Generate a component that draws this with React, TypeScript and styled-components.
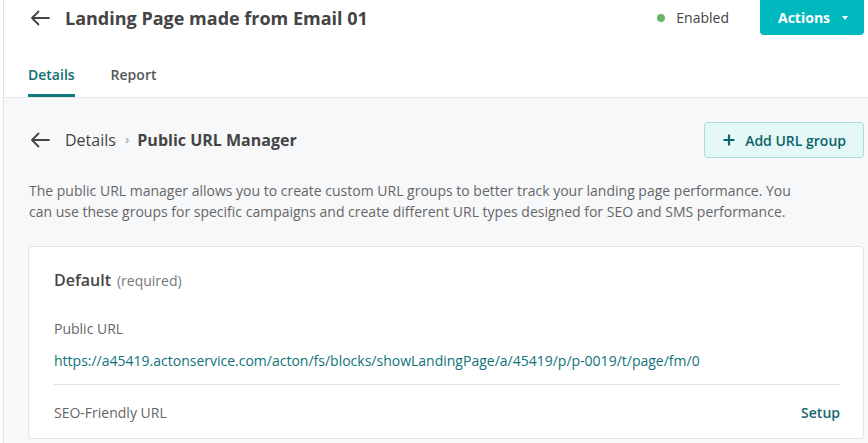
import React from "react";
import styled, { createGlobalStyle } from "styled-components";

const GlobalStyle = createGlobalStyle`
  html, body {
    margin: 0;
    padding: 0;
    background: #ffffff;
    font-family: "Open Sans", "Noto Sans", Arial, sans-serif;
    color: #444444;
  }
  * { box-sizing: border-box; }
`;

const Shell = styled.div`
  padding-left: 3px;
  background: #ffffff;
  height: 443px;
  overflow: hidden;
`;

const Frame = styled.div`
  border-left: 1px solid #e4e4e4;
  height: 100%;
  background: #f7f8fa;
`;

const Header = styled.header`
  background: #ffffff;
  border-bottom: 1px solid #e6e6e6;
  padding: 0 4px 0 24px;
`;

const TopRow = styled.div`
  display: flex;
  align-items: center;
  height: 35px;
`;

const BackButton = styled.button`
  display: flex;
  align-items: center;
  justify-content: center;
  width: 24px;
  height: 24px;
  padding: 0;
  margin-right: 13px;
  border: none;
  background: none;
  color: #444444;
  cursor: pointer;
`;

const Title = styled.h1`
  margin: 0;
  font-size: 18px;
  font-weight: 700;
  line-height: 24px;
  color: #444444;
`;

const Spacer = styled.div`
  flex: 1;
`;

const Status = styled.div`
  display: flex;
  align-items: center;
  gap: 11px;
  font-size: 14px;
  color: #444444;
  margin-right: 31px;
`;

const Dot = styled.span`
  width: 8px;
  height: 8px;
  border-radius: 50%;
  background: #6ab56a;
`;

const ActionsButton = styled.button`
  display: flex;
  align-items: center;
  gap: 12px;
  height: 35px;
  width: 104px;
  padding: 0 0 0 18px;
  border: none;
  border-radius: 0 0 4px 4px;
  background: #00b9be;
  color: #ffffff;
  font-family: inherit;
  font-size: 14px;
  font-weight: 700;
  cursor: pointer;
`;

const Caret = styled.span`
  width: 0;
  height: 0;
  border-left: 3.5px solid transparent;
  border-right: 3.5px solid transparent;
  border-top: 4px solid #ffffff;
`;

const Tabs = styled.nav`
  display: flex;
  gap: 36px;
  margin-top: 20px;
`;

const Tab = styled.a<{ $active?: boolean }>`
  display: block;
  padding: 10px 0 9px;
  font-size: 14px;
  line-height: 20px;
  font-weight: 600;
  color: ${({ $active }) => ($active ? "#0f6e73" : "#555555")};
  border-bottom: 3px solid ${({ $active }) => ($active ? "#0f7a80" : "transparent")};
  text-decoration: none;
  cursor: pointer;
`;

const Content = styled.main`
  padding: 24px 4px 0 24px;
`;

const CrumbRow = styled.div`
  display: flex;
  align-items: center;
  height: 36px;
`;

const Crumbs = styled.div`
  display: flex;
  align-items: center;
  font-size: 16px;
  line-height: 24px;
  color: #444444;
`;

const CrumbSep = styled.span`
  margin: 0 8px 0 9px;
  color: #b4b4b4;
  font-size: 12px;
  font-weight: 700;
`;

const CrumbCurrent = styled.span`
  font-weight: 700;
`;

const AddButton = styled.button`
  display: flex;
  align-items: center;
  gap: 10px;
  height: 36px;
  padding: 0 17px 0 18px;
  border: 1px solid #a9dcdc;
  border-radius: 4px;
  background: #e5f8f8;
  color: #0b6469;
  font-family: inherit;
  font-size: 14px;
  font-weight: 600;
  cursor: pointer;
`;

const Description = styled.p`
  margin: 22px 0 0 1px;
  max-width: 780px;
  font-size: 14px;
  line-height: 21px;
  color: #666666;
`;

const Card = styled.section`
  margin-top: 24px;
  background: #ffffff;
  border: 1px solid #e2e2e2;
  border-radius: 4px;
  padding: 21px 23px 15px 25px;
`;

const CardTitle = styled.h2`
  margin: 0;
  font-size: 16px;
  line-height: 24px;
  font-weight: 600;
  color: #444444;
`;

const Note = styled.span`
  margin-left: 6px;
  font-size: 14px;
  font-weight: 400;
  color: #777777;
`;

const FieldLabel = styled.div<{ $top: number }>`
  margin-top: ${({ $top }) => $top}px;
  font-size: 14px;
  line-height: 20px;
  color: #666666;
`;

const UrlText = styled.a`
  display: block;
  margin-top: 12px;
  font-size: 14px;
  line-height: 20px;
  color: #0f737a;
  text-decoration: none;
`;

const Divider = styled.hr`
  margin: 13px 0 0;
  border: none;
  border-top: 1px solid #e2e2e2;
`;

const SeoRow = styled.div`
  display: flex;
  align-items: center;
  justify-content: space-between;
  margin-top: 18px;
  font-size: 14px;
  line-height: 20px;
  color: #666666;
`;

const SetupLink = styled.a`
  font-weight: 600;
  color: #16686f;
  text-decoration: none;
  cursor: pointer;
`;

const ArrowLeft = () => (
  <svg width="20" height="16" viewBox="0 0 20 16" fill="none">
    <path
      d="M19 8H2M8.5 1.5L2 8l6.5 6.5"
      stroke="currentColor"
      strokeWidth="1.8"
      strokeLinecap="round"
      strokeLinejoin="round"
    />
  </svg>
);

const Plus = () => (
  <svg width="12" height="12" viewBox="0 0 12 12">
    <path d="M6 0.5v11M0.5 6h11" stroke="currentColor" strokeWidth="2.2" />
  </svg>
);

export default function App() {
  return (
    <>
      <GlobalStyle />
      <Shell>
        <Frame>
          <Header>
            <TopRow>
              <BackButton aria-label="Back">
                <ArrowLeft />
              </BackButton>
              <Title>Landing Page made from Email 01</Title>
              <Spacer />
              <Status>
                <Dot />
                Enabled
              </Status>
              <ActionsButton>
                Actions
                <Caret />
              </ActionsButton>
            </TopRow>
            <Tabs>
              <Tab $active>Details</Tab>
              <Tab>Report</Tab>
            </Tabs>
          </Header>

          <Content>
            <CrumbRow>
              <BackButton aria-label="Back to details">
                <ArrowLeft />
              </BackButton>
              <Crumbs>
                Details
                <CrumbSep>›</CrumbSep>
                <CrumbCurrent>Public URL Manager</CrumbCurrent>
              </Crumbs>
              <Spacer />
              <AddButton>
                <Plus />
                Add URL group
              </AddButton>
            </CrumbRow>

            <Description>
              The public URL manager allows you to create custom URL groups to better track
              your landing page performance. You can use these groups for specific campaigns
              and create different URL types designed for SEO and SMS performance.
            </Description>

            <Card>
              <CardTitle>
                Default<Note>(required)</Note>
              </CardTitle>
              <FieldLabel $top={26}>Public URL</FieldLabel>
              <UrlText>
                https://a45419.actonservice.com/acton/fs/blocks/showLandingPage/a/45419/p/p-0019/t/page/fm/0
              </UrlText>
              <Divider />
              <SeoRow>
                SEO-Friendly URL
                <SetupLink>Setup</SetupLink>
              </SeoRow>
            </Card>
          </Content>
        </Frame>
      </Shell>
    </>
  );
}
